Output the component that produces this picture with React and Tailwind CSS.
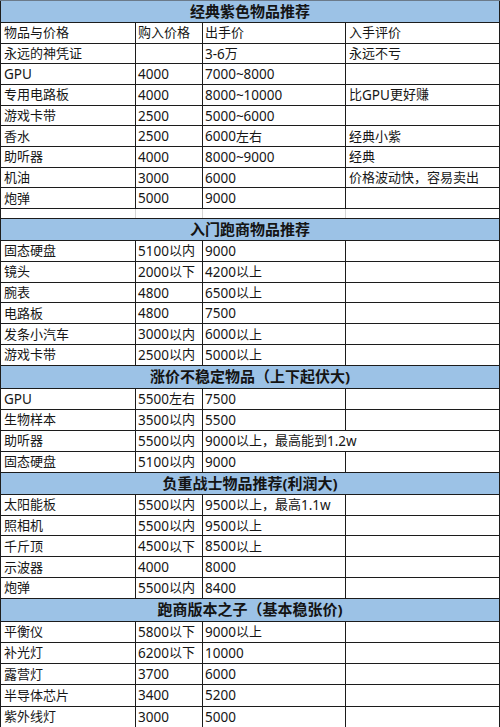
const sections = [
  {
    title: "经典紫色物品推荐",
    h: "h-[22px]",
    rowH: "h-[20.67px]",
    rows: [
      ["物品与价格", "购入价格", "出手价", "入手评价"],
      ["永远的神凭证", "", "3-6万", "永远不亏"],
      ["GPU", "4000", "7000~8000", ""],
      ["专用电路板", "4000", "8000~10000", "比GPU更好赚"],
      ["游戏卡带", "2500", "5000~6000", ""],
      ["香水", "2500", "6000左右", "经典小紫"],
      ["助听器", "4000", "8000~9000", "经典"],
      ["机油", "3000", "6000", "价格波动快，容易卖出"],
      ["炮弹", "5000", "9000", ""],
    ],
    spacer: true,
  },
  {
    title: "入门跑商物品推荐",
    h: "h-[23px] border-t",
    rowH: "h-[20.83px]",
    rows: [
      ["固态硬盘", "5100以内", "9000", ""],
      ["镜头", "2000以下", "4200以上", ""],
      ["腕表", "4800", "6500以上", ""],
      ["电路板", "4800", "7500", ""],
      ["发条小汽车", "3000以内", "6000以上", ""],
      ["游戏卡带", "2500以内", "5000以上", ""],
    ],
  },
  {
    title: "涨价不稳定物品（上下起伏大)",
    h: "h-[23px]",
    rowH: "h-[21px]",
    rows: [
      ["GPU", "5500左右", "7500", ""],
      ["生物样本", "3500以内", "5500", ""],
      ["助听器", "5500以内", "9000以上，最高能到1.2w", null],
      ["固态硬盘", "5100以内", "9000", ""],
    ],
  },
  {
    title: "负重战士物品推荐(利润大)",
    h: "h-[22px]",
    rowH: "h-[20.8px]",
    rows: [
      ["太阳能板", "5500以内", "9500以上，最高1.1w", ""],
      ["照相机", "5500以内", "9500以上", ""],
      ["千斤顶", "4500以下", "8500以上", ""],
      ["示波器", "4000", "8000", ""],
      ["炮弹", "5500以内", "8400", ""],
    ],
  },
  {
    title: "跑商版本之子（基本稳张价)",
    h: "h-[23px]",
    rowH: "h-[21.2px]",
    rows: [
      ["平衡仪", "5800以下", "9000以上", ""],
      ["补光灯", "6200以下", "10000", ""],
      ["露营灯", "3700", "6000", ""],
      ["半导体芯片", "3400", "5200", ""],
      ["紫外线灯", "3000", "5000", ""],
    ],
  },
];

// CJK glyphs are set a touch smaller than the latin digits, like the sheet
function Txt({ s }) {
  return s.split(/([\u3000-\u9fff\uff00-\uffef]+)/).map((part, i) =>
    /[\u3000-\u9fff\uff00-\uffef]/.test(part) ? (
      <span key={i} className="text-[13px]">
        {part}
      </span>
    ) : (
      part
    )
  );
}

const cell = "border-r-[1.5px] border-[#1c1c1c] flex items-center whitespace-nowrap";

function Row({ cells, h }) {
  const merged = cells[3] === null;
  return (
    <div
      className={`grid grid-cols-[135px_67px_143px_1fr] ${h} box-border border-b border-l border-[#1c1c1c] bg-white`}
    >
      <div className={`${cell} pl-[3px]`}>
        <Txt s={cells[0]} />
      </div>
      <div className={`${cell} pl-[2px]`}>
        <Txt s={cells[1]} />
      </div>
      {merged ? (
        <div className={`${cell} col-span-2 pl-[2px]`}>
          <Txt s={cells[2]} />
        </div>
      ) : (
        <>
          <div className={`${cell} pl-[2px]`}>
            <Txt s={cells[2]} />
          </div>
          <div className={`${cell} pl-[3px]`}>
            <Txt s={cells[3]} />
          </div>
        </>
      )}
    </div>
  );
}

export default function App() {
  return (
    <div
      className="w-[500px] h-[727px] overflow-hidden bg-white text-[13.5px] text-[#161616]"
      style={{ fontFamily: '"Noto Sans", "Noto Sans CJK SC", sans-serif' }}
    >
      <div className="border-t border-[#6b7a8a]">
        {sections.map((s, i) => (
          <div key={i}>
            <div
              className={`${s.h} box-border flex items-center justify-center bg-[#9cc2e6] border-b border-l border-r-[1.5px] border-[#1c1c1c] text-[15px] font-bold text-[#141414] leading-none`}
            >
              {s.title}
            </div>
            {s.rows.map((r, j) => (
              <Row key={j} cells={r} h={s.rowH} />
            ))}
            {s.spacer && (
              <div className="grid grid-cols-[135px_67px_143px_1fr] h-[9px] border-l border-[#1c1c1c]">
                <div className="border-r border-[#d4d4d4]" />
                <div className="border-r border-[#d4d4d4]" />
                <div className="border-r border-[#d4d4d4]" />
                <div className="border-r-[1.5px] border-[#1c1c1c]" />
              </div>
            )}
          </div>
        ))}
      </div>
    </div>
  );
}
